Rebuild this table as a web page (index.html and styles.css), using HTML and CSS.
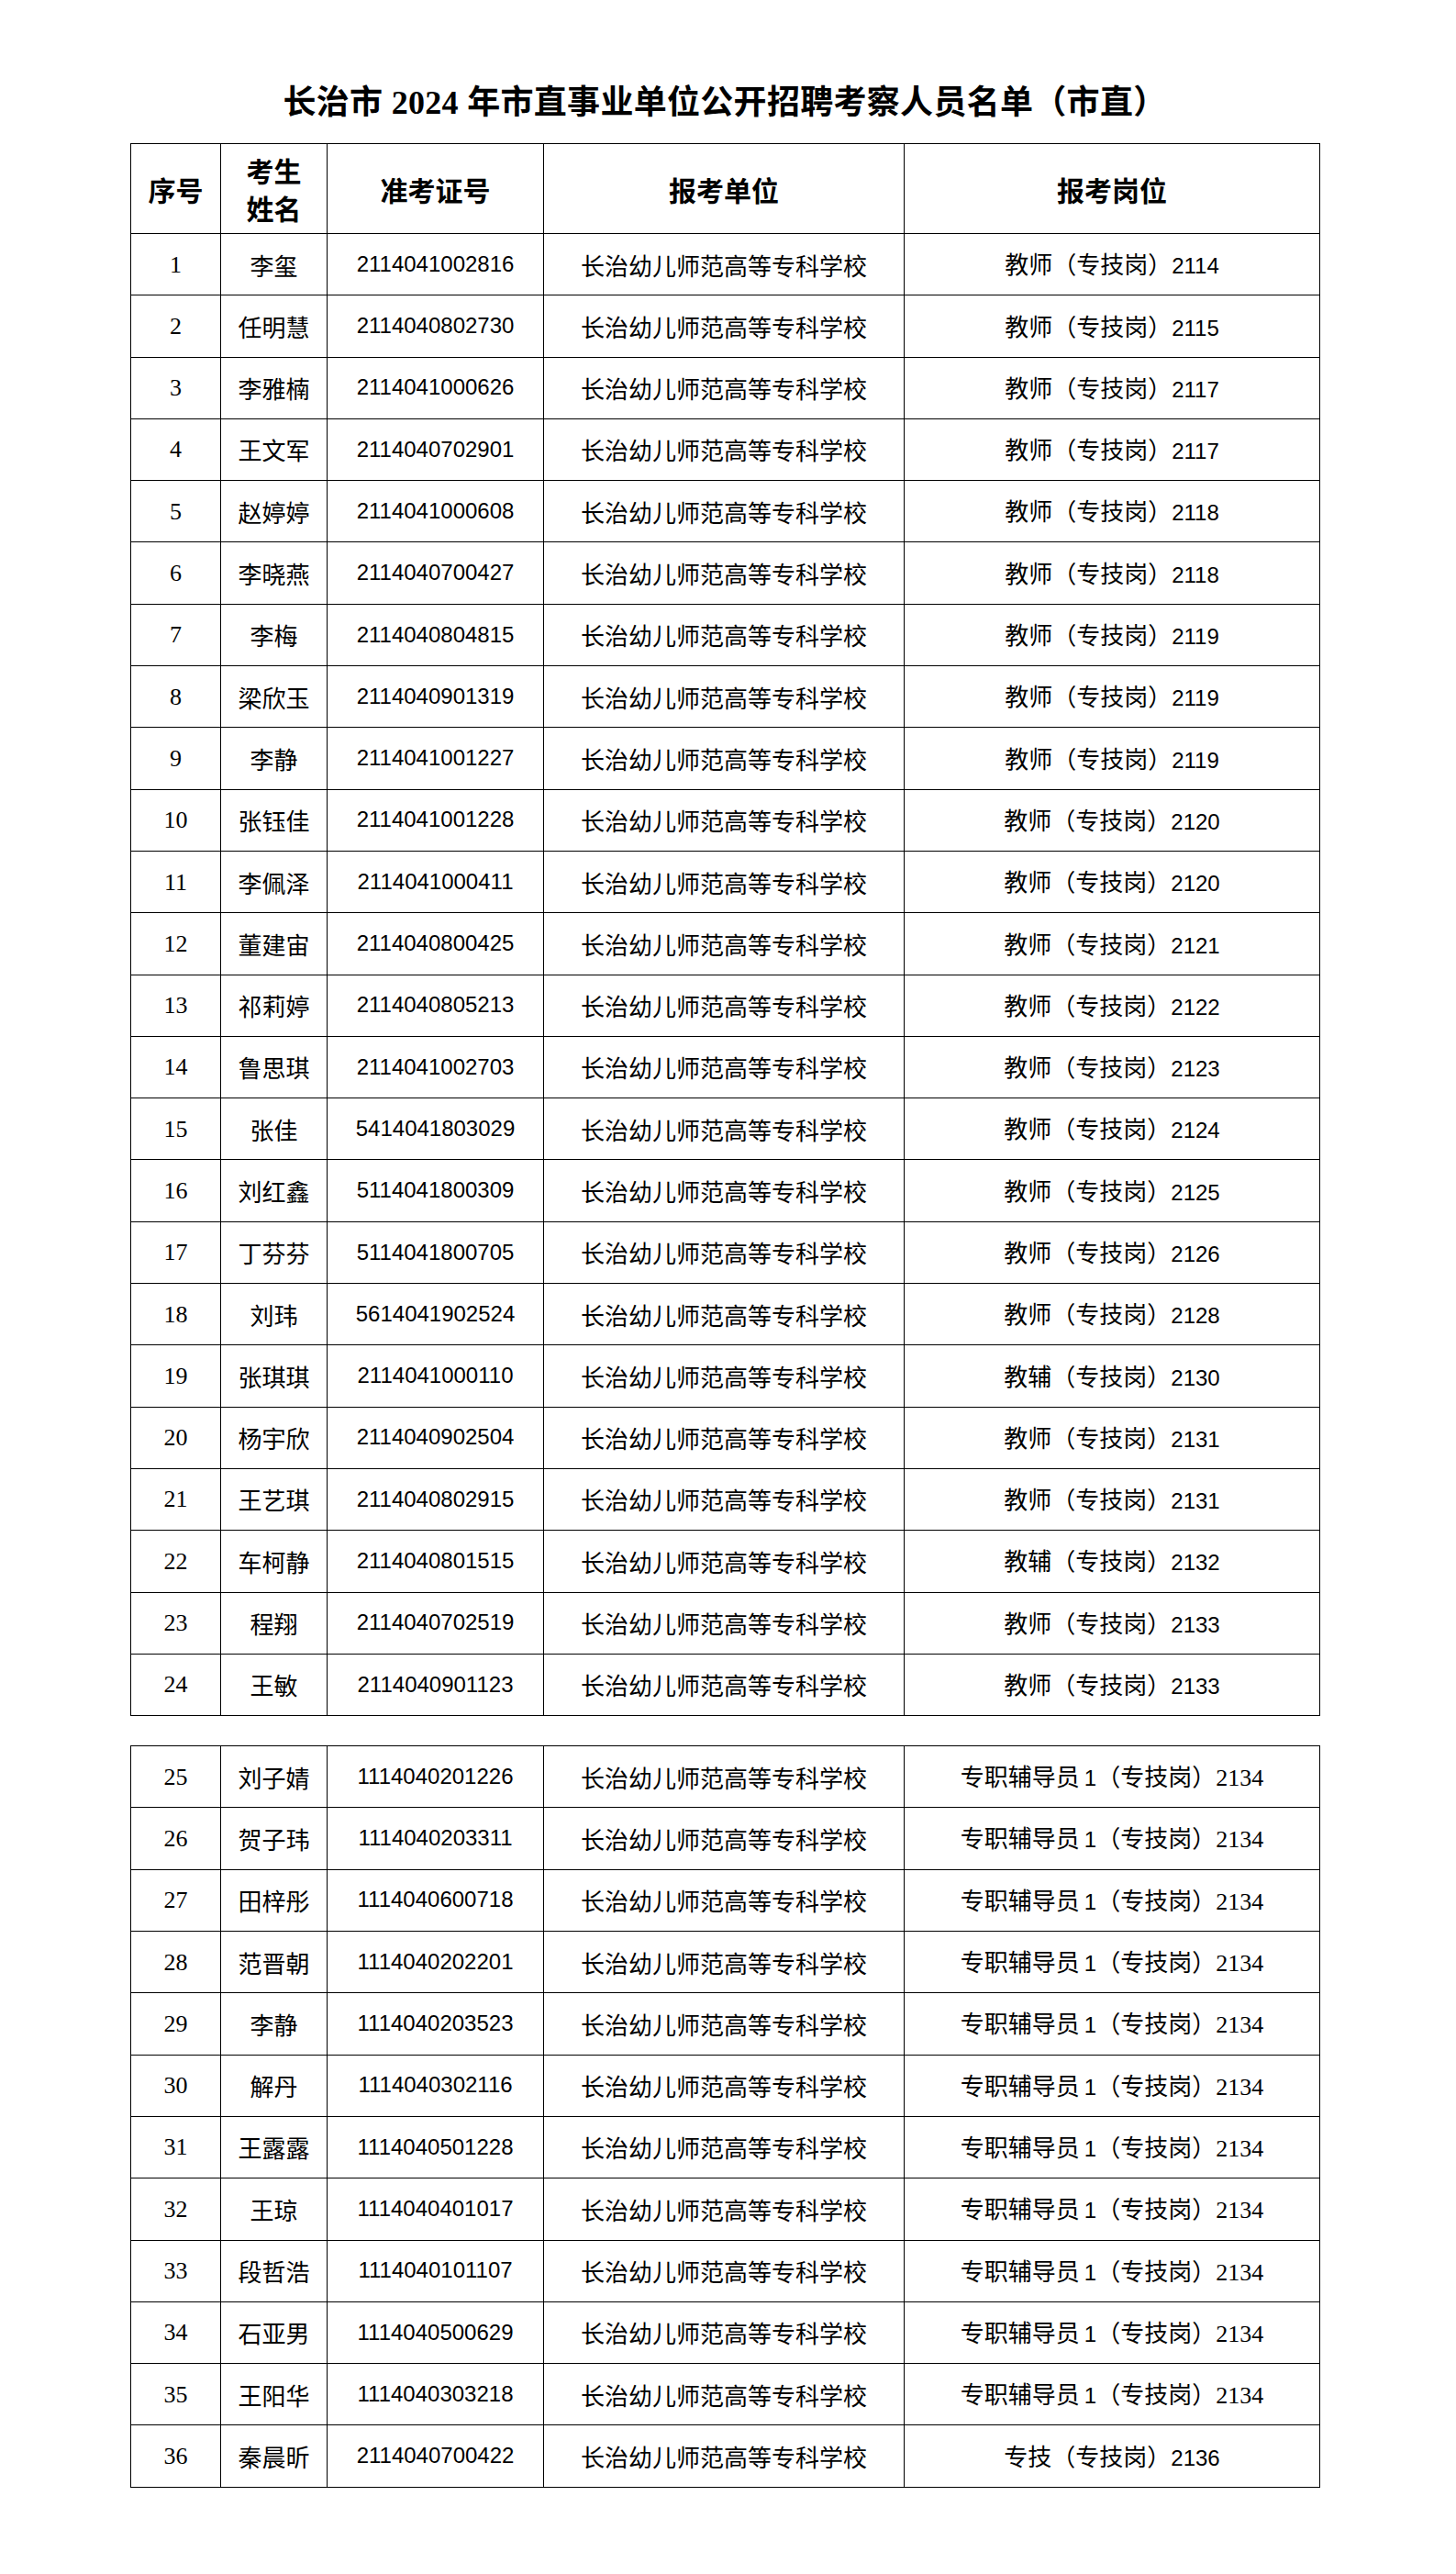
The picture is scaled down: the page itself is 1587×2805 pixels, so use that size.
FILE: index.html
```html
<!DOCTYPE html>
<html lang="zh-CN">
<head>
<meta charset="utf-8">
<title>长治市2024年市直事业单位公开招聘考察人员名单（市直）</title>
<link rel="stylesheet" href="styles.css">
</head>
<body>
<div class="page">
  <h1 class="title">长治市 2024 年市直事业单位公开招聘考察人员名单（市直）</h1>

  <table class="roster">
    <colgroup>
      <col class="c-seq"><col class="c-name"><col class="c-id"><col class="c-unit"><col class="c-post">
    </colgroup>
    <thead>
      <tr class="head">
        <th>序号</th>
        <th class="two-line">考生<br>姓名</th>
        <th>准考证号</th>
        <th>报考单位</th>
        <th>报考岗位</th>
      </tr>
    </thead>
    <tbody>
      <tr><td class="seq">1</td><td>李玺</td><td class="id">2114041002816</td><td>长治幼儿师范高等专科学校</td><td>教师（专技岗）<span class="cal">2114</span></td></tr>
      <tr><td class="seq">2</td><td>任明慧</td><td class="id">2114040802730</td><td>长治幼儿师范高等专科学校</td><td>教师（专技岗）<span class="cal">2115</span></td></tr>
      <tr><td class="seq">3</td><td>李雅楠</td><td class="id">2114041000626</td><td>长治幼儿师范高等专科学校</td><td>教师（专技岗）<span class="cal">2117</span></td></tr>
      <tr><td class="seq">4</td><td>王文军</td><td class="id">2114040702901</td><td>长治幼儿师范高等专科学校</td><td>教师（专技岗）<span class="cal">2117</span></td></tr>
      <tr><td class="seq">5</td><td>赵婷婷</td><td class="id">2114041000608</td><td>长治幼儿师范高等专科学校</td><td>教师（专技岗）<span class="cal">2118</span></td></tr>
      <tr><td class="seq">6</td><td>李晓燕</td><td class="id">2114040700427</td><td>长治幼儿师范高等专科学校</td><td>教师（专技岗）<span class="cal">2118</span></td></tr>
      <tr><td class="seq">7</td><td>李梅</td><td class="id">2114040804815</td><td>长治幼儿师范高等专科学校</td><td>教师（专技岗）<span class="cal">2119</span></td></tr>
      <tr><td class="seq">8</td><td>梁欣玉</td><td class="id">2114040901319</td><td>长治幼儿师范高等专科学校</td><td>教师（专技岗）<span class="cal">2119</span></td></tr>
      <tr><td class="seq">9</td><td>李静</td><td class="id">2114041001227</td><td>长治幼儿师范高等专科学校</td><td>教师（专技岗）<span class="cal">2119</span></td></tr>
      <tr><td class="seq">10</td><td>张钰佳</td><td class="id">2114041001228</td><td>长治幼儿师范高等专科学校</td><td>教师（专技岗）<span class="cal">2120</span></td></tr>
      <tr><td class="seq">11</td><td>李佩泽</td><td class="id">2114041000411</td><td>长治幼儿师范高等专科学校</td><td>教师（专技岗）<span class="cal">2120</span></td></tr>
      <tr><td class="seq">12</td><td>董建宙</td><td class="id">2114040800425</td><td>长治幼儿师范高等专科学校</td><td>教师（专技岗）<span class="cal">2121</span></td></tr>
      <tr><td class="seq">13</td><td>祁莉婷</td><td class="id">2114040805213</td><td>长治幼儿师范高等专科学校</td><td>教师（专技岗）<span class="cal">2122</span></td></tr>
      <tr><td class="seq">14</td><td>鲁思琪</td><td class="id">2114041002703</td><td>长治幼儿师范高等专科学校</td><td>教师（专技岗）<span class="cal">2123</span></td></tr>
      <tr><td class="seq">15</td><td>张佳</td><td class="id">5414041803029</td><td>长治幼儿师范高等专科学校</td><td>教师（专技岗）<span class="cal">2124</span></td></tr>
      <tr><td class="seq">16</td><td>刘红鑫</td><td class="id">5114041800309</td><td>长治幼儿师范高等专科学校</td><td>教师（专技岗）<span class="cal">2125</span></td></tr>
      <tr><td class="seq">17</td><td>丁芬芬</td><td class="id">5114041800705</td><td>长治幼儿师范高等专科学校</td><td>教师（专技岗）<span class="cal">2126</span></td></tr>
      <tr><td class="seq">18</td><td>刘玮</td><td class="id">5614041902524</td><td>长治幼儿师范高等专科学校</td><td>教师（专技岗）<span class="cal">2128</span></td></tr>
      <tr><td class="seq">19</td><td>张琪琪</td><td class="id">2114041000110</td><td>长治幼儿师范高等专科学校</td><td>教辅（专技岗）<span class="cal">2130</span></td></tr>
      <tr><td class="seq">20</td><td>杨宇欣</td><td class="id">2114040902504</td><td>长治幼儿师范高等专科学校</td><td>教师（专技岗）<span class="cal">2131</span></td></tr>
      <tr><td class="seq">21</td><td>王艺琪</td><td class="id">2114040802915</td><td>长治幼儿师范高等专科学校</td><td>教师（专技岗）<span class="cal">2131</span></td></tr>
      <tr><td class="seq">22</td><td>车柯静</td><td class="id">2114040801515</td><td>长治幼儿师范高等专科学校</td><td>教辅（专技岗）<span class="cal">2132</span></td></tr>
      <tr><td class="seq">23</td><td>程翔</td><td class="id">2114040702519</td><td>长治幼儿师范高等专科学校</td><td>教师（专技岗）<span class="cal">2133</span></td></tr>
      <tr><td class="seq">24</td><td>王敏</td><td class="id">2114040901123</td><td>长治幼儿师范高等专科学校</td><td>教师（专技岗）<span class="cal">2133</span></td></tr>
    </tbody>
  </table>

  <table class="roster second">
    <colgroup>
      <col class="c-seq"><col class="c-name"><col class="c-id"><col class="c-unit"><col class="c-post">
    </colgroup>
    <tbody>
      <tr><td class="seq">25</td><td>刘子婧</td><td class="id">1114040201226</td><td>长治幼儿师范高等专科学校</td><td>专职辅导员<span class="cal one">1</span>（专技岗）<span class="tnr">2134</span></td></tr>
      <tr><td class="seq">26</td><td>贺子玮</td><td class="id">1114040203311</td><td>长治幼儿师范高等专科学校</td><td>专职辅导员<span class="cal one">1</span>（专技岗）<span class="tnr">2134</span></td></tr>
      <tr><td class="seq">27</td><td>田梓彤</td><td class="id">1114040600718</td><td>长治幼儿师范高等专科学校</td><td>专职辅导员<span class="cal one">1</span>（专技岗）<span class="tnr">2134</span></td></tr>
      <tr><td class="seq">28</td><td>范晋朝</td><td class="id">1114040202201</td><td>长治幼儿师范高等专科学校</td><td>专职辅导员<span class="cal one">1</span>（专技岗）<span class="tnr">2134</span></td></tr>
      <tr><td class="seq">29</td><td>李静</td><td class="id">1114040203523</td><td>长治幼儿师范高等专科学校</td><td>专职辅导员<span class="cal one">1</span>（专技岗）<span class="tnr">2134</span></td></tr>
      <tr><td class="seq">30</td><td>解丹</td><td class="id">1114040302116</td><td>长治幼儿师范高等专科学校</td><td>专职辅导员<span class="cal one">1</span>（专技岗）<span class="tnr">2134</span></td></tr>
      <tr><td class="seq">31</td><td>王露露</td><td class="id">1114040501228</td><td>长治幼儿师范高等专科学校</td><td>专职辅导员<span class="cal one">1</span>（专技岗）<span class="tnr">2134</span></td></tr>
      <tr><td class="seq">32</td><td>王琼</td><td class="id">1114040401017</td><td>长治幼儿师范高等专科学校</td><td>专职辅导员<span class="cal one">1</span>（专技岗）<span class="tnr">2134</span></td></tr>
      <tr><td class="seq">33</td><td>段哲浩</td><td class="id">1114040101107</td><td>长治幼儿师范高等专科学校</td><td>专职辅导员<span class="cal one">1</span>（专技岗）<span class="tnr">2134</span></td></tr>
      <tr><td class="seq">34</td><td>石亚男</td><td class="id">1114040500629</td><td>长治幼儿师范高等专科学校</td><td>专职辅导员<span class="cal one">1</span>（专技岗）<span class="tnr">2134</span></td></tr>
      <tr><td class="seq">35</td><td>王阳华</td><td class="id">1114040303218</td><td>长治幼儿师范高等专科学校</td><td>专职辅导员<span class="cal one">1</span>（专技岗）<span class="tnr">2134</span></td></tr>
      <tr><td class="seq">36</td><td>秦晨昕</td><td class="id">2114040700422</td><td>长治幼儿师范高等专科学校</td><td>专技（专技岗）<span class="cal">2136</span></td></tr>
    </tbody>
  </table>
</div>
</body>
</html>
```

FILE: styles.css
```css
html, body {
  margin: 0;
  padding: 0;
  background: #ffffff;
  color: #000000;
}

.page {
  width: 1296px;
  padding: 87px 0 80px 142px;
}

.title {
  margin: 0 0 19px;
  text-align: center;
  font-family: "Liberation Serif", "Noto Sans CJK SC", serif;
  font-size: 36px;
  line-height: 50px;
  font-weight: 700;
  letter-spacing: 0.3px;
}

.roster {
  width: 1296px;
  table-layout: fixed;
  border-collapse: collapse;
  font-family: "Noto Sans CJK SC", sans-serif;
  font-size: 26px;
}

.roster.second {
  margin-top: 32px;
}

.c-seq { width: 98px; }
.c-name { width: 116px; }
.c-id { width: 236px; }
.c-unit { width: 393px; }
.c-post { width: 453px; }

.roster th,
.roster td {
  border: 1px solid #000000;
  padding: 0;
  text-align: center;
  vertical-align: middle;
  white-space: nowrap;
  line-height: 1.2;
}

.roster tbody tr {
  height: 67.3px;
}

.roster .head {
  height: 98px;
}

.roster th {
  font-family: "Noto Sans CJK SC", sans-serif;
  font-size: 30px;
  font-weight: 700;
}

.roster th.two-line {
  line-height: 41px;
}

.roster td {
  font-weight: 400;
}

.roster td.seq {
  font-family: "Liberation Serif", serif;
  font-size: 26px;
}

.roster td.id {
  font-family: "Liberation Sans", sans-serif;
  font-size: 24px;
}

.cal {
  font-family: "Liberation Sans", sans-serif;
  font-size: 24px;
}

.cal.one {
  margin-left: 5px;
}

.tnr {
  font-family: "Liberation Serif", serif;
  font-size: 26px;
}
```
